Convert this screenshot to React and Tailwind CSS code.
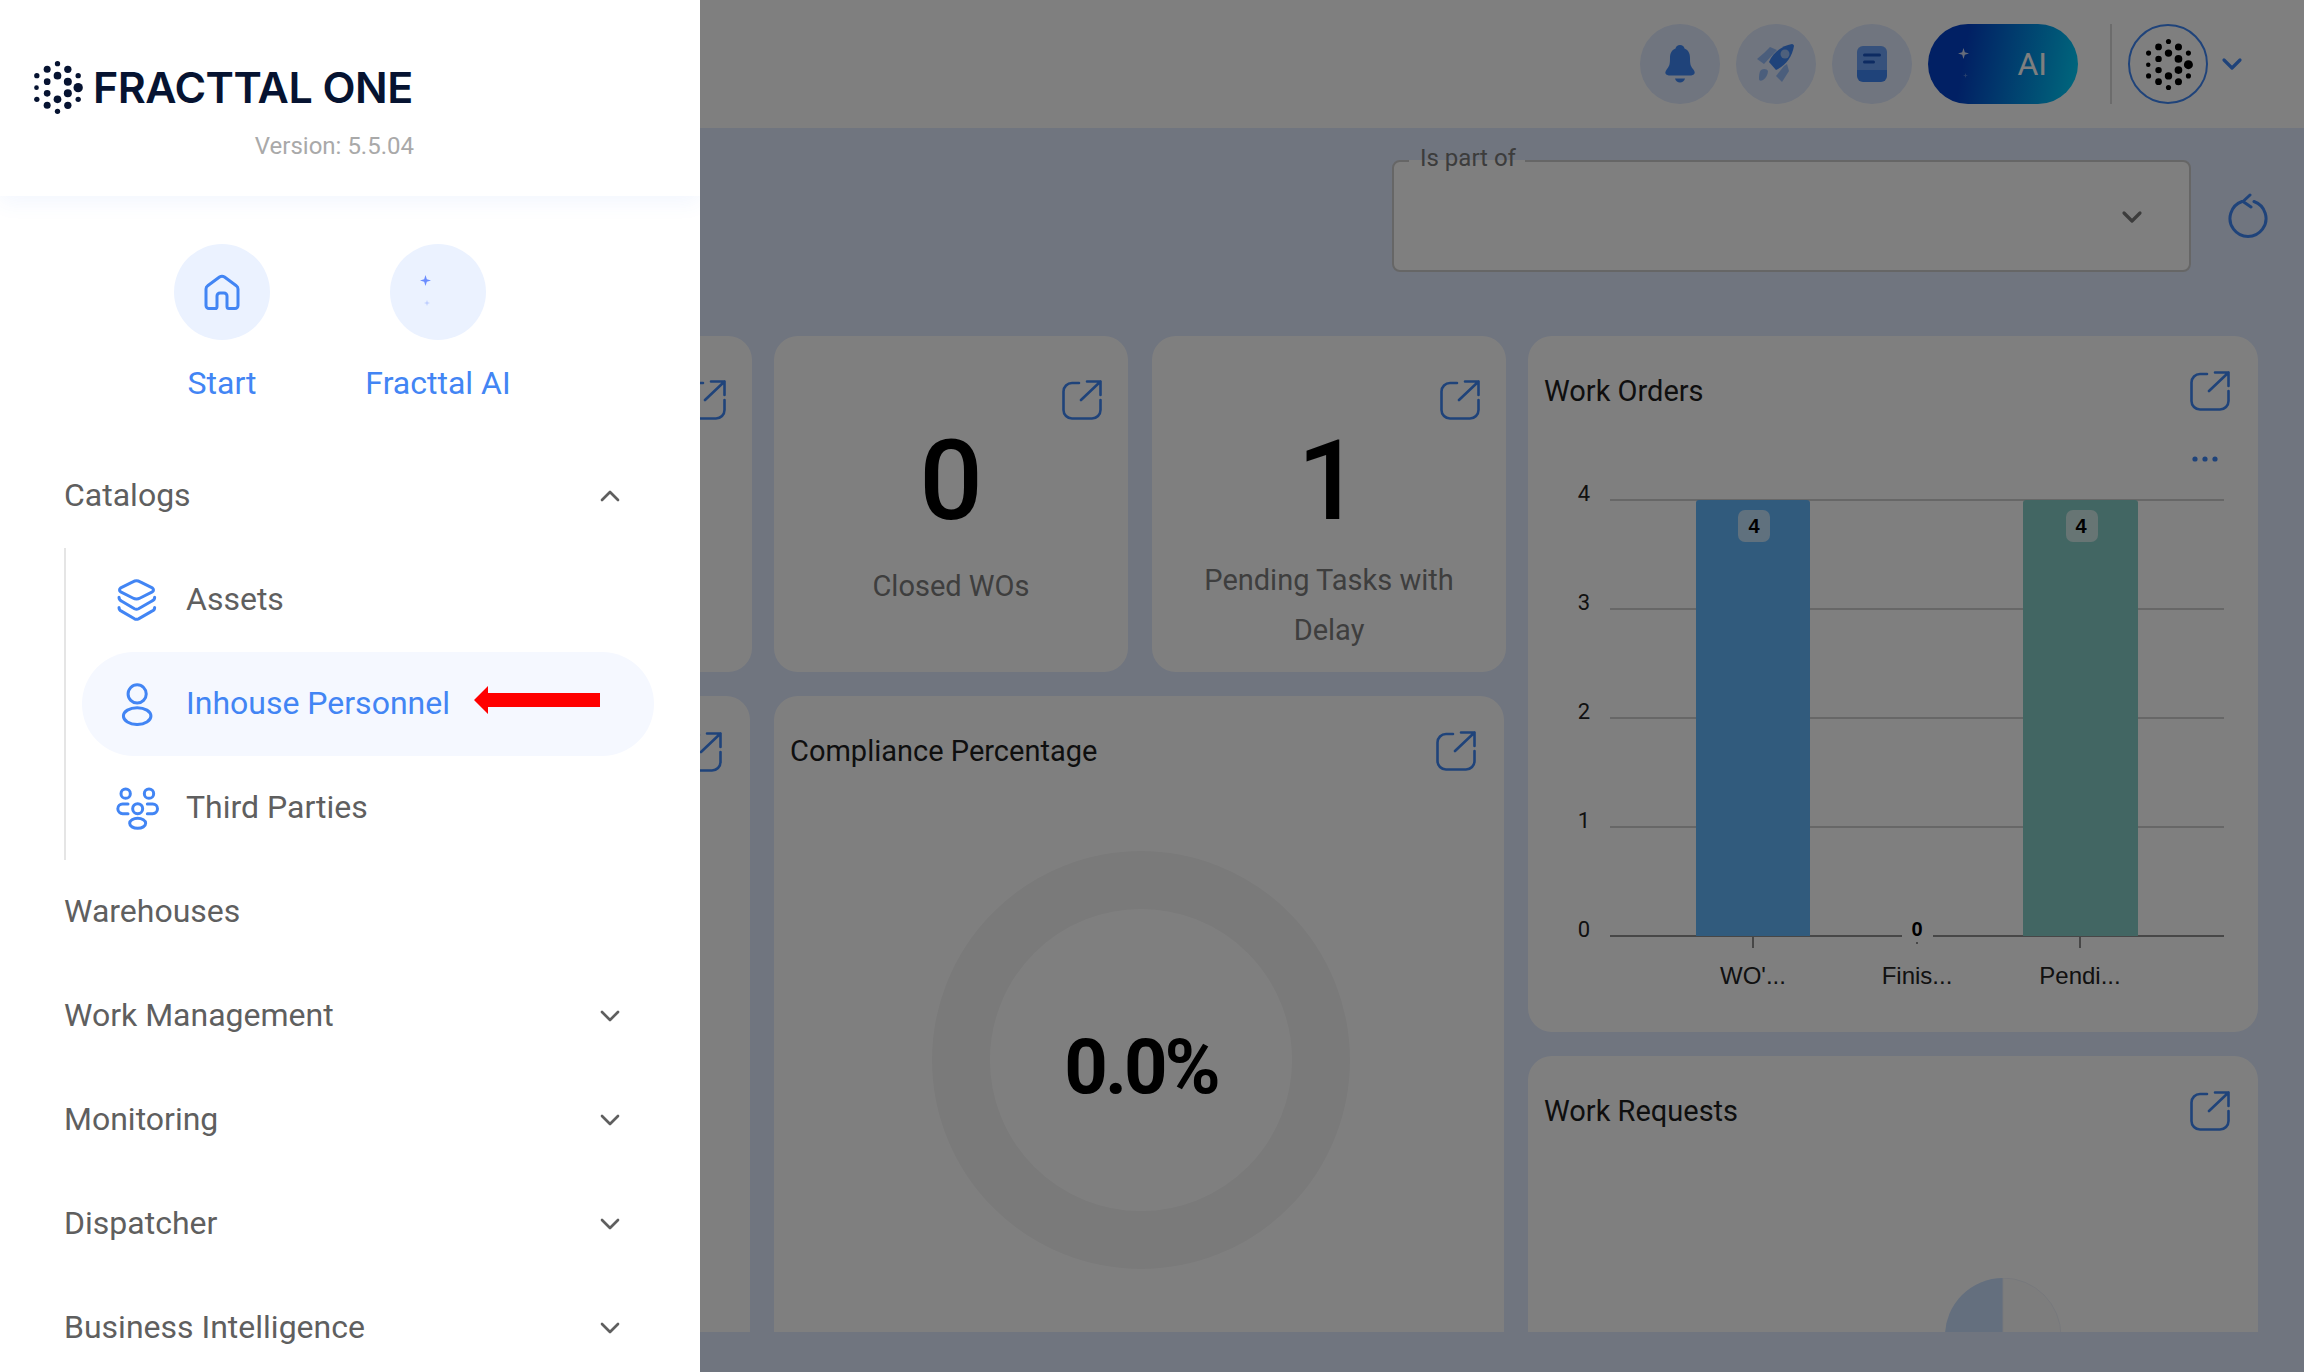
import React from "react";
import { ChevronDown, ChevronUp } from "lucide-react";

const dots = [
  [109, 42, 8], [78, 59, 10.5], [140, 59, 11], [47, 78, 8], [171, 78, 8], [46, 114, 7], [171, 114, 14],
  [47, 149, 8], [171, 149, 8], [78, 167, 10.5], [140, 167, 11], [109, 185, 8],
  [109, 78, 11.5], [78, 96, 10], [140, 96, 12], [78, 131, 10], [140, 131, 12], [109, 149, 11.5],
];

function Dots({ w, h, color }) {
  return (
    <svg width={w} height={h} viewBox="33 31 152 165" fill={color}>
      {dots.map(([x, y, r]) => (
        <circle key={`${x}-${y}`} cx={x} cy={y} r={r} />
      ))}
    </svg>
  );
}

function Ext() {
  return (
    <svg width="40" height="40" viewBox="0 0 40 40" fill="none" stroke="#3f87f5" strokeWidth="2.6" strokeLinecap="round" strokeLinejoin="round">
      <path d="M17 3H10a8.5 8.5 0 0 0-8.5 8.5v18.5A8.5 8.5 0 0 0 10 38.500h20a8.500 8.500 0 0 0 8.500-8.500V20" />
      <path d="M19 20 38.500 1.500M25 1.500h13.500V15" />
    </svg>
  );
}

function Sparkle({ size, color, opacity = 1 }) {
  return (
    <svg width={size} height={size} viewBox="0 0 10 10" fill={color} opacity={opacity}>
      <path d="M5 0 6.200 3.800 10 5 6.200 6.200 5 10 3.800 6.200 0 5 3.800 3.800Z" />
    </svg>
  );
}

function StatCard({ value, label, extra = "", labelPad = "" }) {
  return (
    <div className={`relative h-[336px] w-[354px] shrink-0 rounded-[24px] bg-white ${extra}`}>
      <div className="absolute right-[26px] top-[44px]">
        <Ext />
      </div>
      {value && (
        <div className="flex h-full flex-col items-center text-center">
          <div className="mt-[89px] text-[112px] font-medium leading-[112px] text-black">{value}</div>
          <div className={`mt-[18px] w-[310px] text-[29px] leading-[50px] text-[#7c7c7c] ${labelPad}`}>{label}</div>
        </div>
      )}
    </div>
  );
}

function Chart() {
  const lines = [500, 609, 718, 827];
  const chart = { fontFamily: "'Liberation Sans', Arial, sans-serif" };
  return (
    <svg width="730" height="590" viewBox="1528 442 730 590" style={chart} className="block">
      <circle cx="2195" cy="459" r="2.600" fill="#3f87f5" />
      <circle cx="2205" cy="459" r="2.600" fill="#3f87f5" />
      <circle cx="2215" cy="459" r="2.600" fill="#3f87f5" />
      {lines.map((y) => (
        <line key={y} x1="1610" x2="2224" y1={y} y2={y} stroke="#cfcfcf" strokeWidth="2" />
      ))}
      <line x1="1610" x2="2224" y1="936" y2="936" stroke="#8f8f8f" strokeWidth="2" />
      {[
        ["4", 501],
        ["3", 610],
        ["2", 719],
        ["1", 828],
        ["0", 937],
      ].map(([t, y]) => (
        <text key={t} x="1584" y={y} textAnchor="middle" fontSize="22" fill="#222" style={{ fontFamily: "Roboto, sans-serif" }}>
          {t}
        </text>
      ))}
      <path d="M1696 936V503a3 3 0 0 1 3-3h108a3 3 0 0 1 3 3v433Z" fill="#62b6fa" />
      <path d="M2023 936V503a3 3 0 0 1 3-3h109a3 3 0 0 1 3 3v433Z" fill="#84ccc6" />
      <line x1="1753" x2="1753" y1="936" y2="948" stroke="#8f8f8f" strokeWidth="2" />
      <line x1="1917" x2="1917" y1="942" y2="948" stroke="#8f8f8f" strokeWidth="2" strokeDasharray="2 4" />
      <line x1="2080" x2="2080" y1="936" y2="948" stroke="#8f8f8f" strokeWidth="2" />
      <rect x="1738" y="510" width="32" height="32" rx="7" fill="#ffffff" fillOpacity="0.6" />
      <rect x="2066" y="510" width="32" height="32" rx="7" fill="#ffffff" fillOpacity="0.6" />
      <rect x="1902" y="918" width="31" height="22" fill="#ffffff" />
      <text x="1754" y="533" textAnchor="middle" fontSize="20" fontWeight="700" fill="#000">4</text>
      <text x="2081" y="533" textAnchor="middle" fontSize="20" fontWeight="700" fill="#000">4</text>
      <text x="1917" y="936" textAnchor="middle" fontSize="20" fontWeight="700" fill="#000">0</text>
      {[
        ["WO'...", 1753],
        ["Finis...", 1917],
        ["Pendi...", 2080],
      ].map(([t, x]) => (
        <text key={t} x={x} y="984" textAnchor="middle" fontSize="24" fill="#222">
          {t}
        </text>
      ))}
    </svg>
  );
}

function NavRow({ label, open, noChevron }) {
  return (
    <div className="flex h-[104px] w-[626px] shrink-0 items-center justify-between pl-[64px] text-[32px] text-[#5f5f5f]">
      <span className="mb-[2px]">{label}</span>
      {!noChevron && (open ? <ChevronUp size={32} strokeWidth={2} color="#5f5f5f" /> : <ChevronDown size={32} strokeWidth={2} color="#5f5f5f" />)}
    </div>
  );
}

function IconAssets() {
  return (
    <svg width="42" height="44" viewBox="50 55 125 130" fill="none" stroke="#4285f4" strokeWidth="9" strokeLinecap="round" strokeLinejoin="round">
      <path d="M100 66Q111 60 122 66L158 84Q165 90 158 96L122 114Q111 120 100 114L64 96Q57 90 64 84Z" />
      <path d="M59 112Q59 120 66 123L105 146Q111 149 117 146L157 123Q165 120 165 112" />
      <path d="M59 142Q59 150 66 153L105 176Q111 179 117 176L157 153Q165 150 165 142" />
    </svg>
  );
}

function IconPerson() {
  return (
    <svg width="42" height="44" viewBox="50 365 125 130" fill="none" stroke="#4285f4" strokeWidth="9">
      <circle cx="113" cy="400" r="27" />
      <ellipse cx="113" cy="466" rx="41" ry="25" />
    </svg>
  );
}

function IconThird() {
  return (
    <svg width="44" height="44" viewBox="46 675 132 132" fill="none" stroke="#4285f4" strokeWidth="9" strokeLinecap="round">
      <circle cx="78" cy="698" r="14" />
      <circle cx="148" cy="698" r="14" />
      <circle cx="114" cy="743" r="15" />
      <ellipse cx="114" cy="787" rx="24" ry="15" />
      <path d="M85 729H69a14 14 0 0 0 0 29H85" />
      <path d="M143 729H159a14 14 0 0 1 0 29H143" />
    </svg>
  );
}

function SubRow({ icon, label, active, children }) {
  return (
    <div className={`flex h-[104px] w-[572px] items-center rounded-full pl-[31px] text-[32px] ${active ? "bg-[#f5f8ff] text-[#4285f4]" : "text-[#5f5f5f]"}`}>
      <div className="flex w-[48px] justify-center">{icon}</div>
      <span className="mb-[2px] ml-[25px]">{label}</span>
      {children}
    </div>
  );
}

function Drawer() {
  return (
    <aside className="absolute left-0 top-0 z-20 h-[1372px] w-[700px] overflow-hidden bg-white">
      <div className="relative h-[196px] shadow-[0_6px_20px_rgba(66,133,244,0.07)]">
        <div className="flex h-[126px] items-center pl-[32px] pt-[48px]">
          <Dots w={51} h={55} color="#061331" />
          <span className="ml-[10px] text-[43px] font-semibold leading-none tracking-[-0.5px] text-[#061331]" style={{ fontFamily: "Inter, sans-serif" }}>
            FRACTTAL ONE
          </span>
        </div>
        <div className="w-[414px] pt-[4px] text-right text-[24px] leading-[32px] text-[#a9a9a9]">Version: 5.5.04</div>
      </div>
      <div className="ml-[114px] flex pt-[48px]">
        <div className="flex w-[216px] flex-col items-center">
          <div className="flex h-[96px] w-[96px] items-center justify-center rounded-full bg-[#ebf2ff]">
            <svg width="36" height="36" viewBox="0 0 36 36" fill="none" stroke="#4285f4" strokeWidth="3" strokeLinejoin="round">
              <path d="M13 34.500H5a3 3 0 0 1-3-3V15a4 4 0 0 1 1.700-3.200L15.500 3a4.500 4.500 0 0 1 5 0L32.300 11.800A4 4 0 0 1 34 15V31.500a3 3 0 0 1-3 3H25a2 2 0 0 1-2-2V22a3 3 0 0 0-3-3H16a3 3 0 0 0-3 3V32.500a2 2 0 0 1-2 2" />
            </svg>
          </div>
          <div className="mt-[19px] text-[32px] leading-[48px] text-[#4285f4]">Start</div>
        </div>
        <div className="flex w-[216px] flex-col items-center">
          <div className="relative h-[96px] w-[96px] rounded-full bg-[#ebf2ff]">
            <div className="absolute left-[30px] top-[31px]">
              <Sparkle size="11" color="#6a8cff" />
            </div>
            <div className="absolute left-[34px] top-[56px]">
              <Sparkle size="6" color="#6a8cff" opacity={0.35} />
            </div>
          </div>
          <div className="mt-[19px] text-[32px] leading-[48px] text-[#4285f4]">Fracttal AI</div>
        </div>
      </div>
      <div className="mt-[37px] flex flex-col">
        <NavRow label="Catalogs" open />
        <div className="ml-[64px] flex h-[312px] flex-col border-l-2 border-[#e5e5e5] pl-[16px]">
          <SubRow icon={<IconAssets />} label="Assets" />
          <SubRow icon={<IconPerson />} label="Inhouse Personnel" active>
            <div className="ml-[24px] -mt-[8px]">
              <svg width="126" height="28" viewBox="0 0 126 28" fill="#ff0000" className="block">
                <path d="M0 14 14 0V7H126V21H14V28Z" />
              </svg>
            </div>
          </SubRow>
          <SubRow icon={<IconThird />} label="Third Parties" />
        </div>
        <NavRow label="Warehouses" noChevron />
        <NavRow label="Work Management" />
        <NavRow label="Monitoring" />
        <NavRow label="Dispatcher" />
        <NavRow label="Business Intelligence" />
      </div>
    </aside>
  );
}

function Header() {
  const circle = "flex h-[80px] w-[80px] items-center justify-center rounded-full bg-[#e0eafe]";
  return (
    <header className="flex h-[128px] items-center justify-end bg-white pr-[56px]">
      <div className="flex h-[80px] items-center gap-[16px]">
        <div className={circle}>
          <svg width="30" height="38" viewBox="0 0 30 38" fill="#3f87f5">
            <path d="M15 0c2.500 0 4 1.500 4.500 3.500 4 1.500 5.500 5 5.500 9.500 0 6 .5 8 3 11 1.700 2 2 3.500 1.500 4.500-.7 1.500-2.500 2-5 2H5.500c-2.500 0-4.300-.5-5-2-.5-1 0-2.500 1.500-4.500 2.500-3 3-5 3-11 0-4.500 1.500-8 5.500-9.500C11 1.500 12.500 0 15 0Z" />
            <path d="M10 33.500h10c-.7 2.500-2.700 4-5 4s-4.300-1.500-5-4Z" />
          </svg>
        </div>
        <div className={circle}>
          <svg width="40" height="40" viewBox="0 0 40 40">
            <g fill="#3f87f5" opacity="0.45">
              <path d="M8 9 14 3 21 6 8 20 1 15Z" />
              <path d="M31 20 33 27 26 38 20 32 28 22Z" />
              <path d="M5 26c3-2 6-1 7 1 0 3-2 7-5 9-2 1-4 1-4-1 0-3 0-7 2-9Z" />
            </g>
            <path fill="#3f87f5" d="M13 18C17 9 25 2 36 0c1 0 2 1 2 2-2 11-8 19-18 24Z" />
            <circle cx="29" cy="10" r="4.500" fill="#9cc0f9" />
          </svg>
        </div>
        <div className={circle}>
          <svg width="30" height="36" viewBox="0 0 30 36">
            <path fill="#3f87f5" opacity="0.72" d="M6 0h18a6 6 0 0 1 6 6v20H0V6a6 6 0 0 1 6-6Z" />
            <path fill="#3f87f5" d="M0 24h30v6a6 6 0 0 1-6 6H6a6 6 0 0 1-6-6Z" />
            <path stroke="#1a56c4" strokeWidth="3" strokeLinecap="round" d="M7.500 9h15M7.500 16h9" />
          </svg>
        </div>
        <div className="relative flex h-[80px] w-[150px] items-center justify-end rounded-full bg-[linear-gradient(100deg,#0340c8_25%,#00dcff_105%)] pr-[31px] text-[32px] text-white">
          <div className="absolute left-[30px] top-[24px]">
            <Sparkle size="11" color="#ffffff" opacity={0.8} />
          </div>
          <div className="absolute left-[35px] top-[49px]">
            <Sparkle size="5" color="#ffffff" opacity={0.3} />
          </div>
          AI
        </div>
        <div className="mx-[16px] h-[80px] w-[2px] bg-[#d8d8d8]" />
      </div>
      <div className="flex h-[80px] w-[80px] items-center justify-center rounded-full border-2 border-[#3f87f5]">
        <Dots w={49} h={53} color="#000000" />
      </div>
      <div className="ml-[8px] flex w-[32px] justify-center">
        <ChevronDown size={32} strokeWidth={2.4} color="#3f87f5" />
      </div>
    </header>
  );
}

function Filter() {
  return (
    <div className="flex h-[208px] justify-end pr-[36px] pt-[32px]">
      <div className="relative flex h-[112px] w-[799px] items-center justify-end rounded-[8px] border-2 border-[#cccccc] bg-white pr-[41px] pt-[2px]">
        <span className="absolute left-[15px] top-[-2px] h-[2px] w-[116px] bg-white" />
        <span className="absolute left-[26px] top-[-19px] text-[24px] leading-[30px] text-[#787878]">Is part of</span>
        <ChevronDown size={32} strokeWidth={2.4} color="#787878" />
      </div>
      <div className="ml-[37px] mt-[33px]">
        <svg width="40" height="46" viewBox="0 0 40 46" fill="none" stroke="#3f87f5" strokeWidth="3" strokeLinecap="round" strokeLinejoin="round">
          <path d="M14 8.500A18 18 0 1 0 26 8.500" />
          <path d="M22 2 15 8.500 23 14" />
        </svg>
      </div>
    </div>
  );
}

function Title({ children }) {
  return <span className="text-[29px] leading-[40px] text-[#1e1e1e]">{children}</span>;
}

export default function App() {
  return (
    <div className="relative h-[1372px] w-[2304px] overflow-hidden bg-[#e0eafe]" style={{ fontFamily: "Roboto, sans-serif" }}>
      <Header />
      <Filter />
      <main className="flex h-[996px] gap-[24px] overflow-hidden pl-[20px]">
        <div className="flex w-[1484px] flex-col gap-[24px]">
          <div className="flex gap-[24px]">
            <StatCard />
            <StatCard extra="-mr-[2px]" />
            <StatCard value="0" label="Closed WOs" labelPad="pt-[6px]" />
            <StatCard value="1" label="Pending Tasks with Delay" />
          </div>
          <div className="flex gap-[24px]">
            <div className="relative h-[800px] w-[730px] rounded-[24px] bg-white">
              <div className="absolute right-[28px] top-[36px]">
                <Ext />
              </div>
            </div>
            <div className="relative h-[800px] w-[730px] rounded-[24px] bg-white">
              <div className="flex items-start justify-between pl-[16px] pr-[28px] pt-[35px]">
                <Title>Compliance Percentage</Title>
                <Ext />
              </div>
              <div className="absolute left-[158px] top-[155px] flex h-[418px] w-[418px] items-center justify-center rounded-full border-[58px] border-[#f5f5f5]">
                <span className="pt-[14px] text-[76px] font-bold leading-none tracking-[-3px] text-black">0.0%</span>
              </div>
            </div>
          </div>
        </div>
        <div className="flex w-[730px] flex-col gap-[24px]">
          <div className="h-[696px] shrink-0 rounded-[24px] bg-white">
            <div className="flex h-[106px] items-start justify-between pl-[16px] pr-[28px] pt-[35px]">
              <Title>Work Orders</Title>
              <Ext />
            </div>
            <Chart />
          </div>
          <div className="relative h-[500px] shrink-0 rounded-[24px] bg-white">
            <div className="flex items-start justify-between pl-[16px] pr-[28px] pt-[35px]">
              <Title>Work Requests</Title>
              <Ext />
            </div>
            <svg width="120" height="60" viewBox="0 0 120 60" className="absolute left-[417px] top-[222px]">
              <path d="M58 58V0A58 58 0 0 0 0 58Z" fill="#c8defc" />
              <path d="M58 58V0A58 58 0 0 1 116 58Z" fill="#fbfbfb" stroke="#eef1f8" strokeWidth="1" />
            </svg>
          </div>
        </div>
      </main>
      <div className="absolute inset-0 z-10 bg-black/50" />
      <Drawer />
    </div>
  );
}
